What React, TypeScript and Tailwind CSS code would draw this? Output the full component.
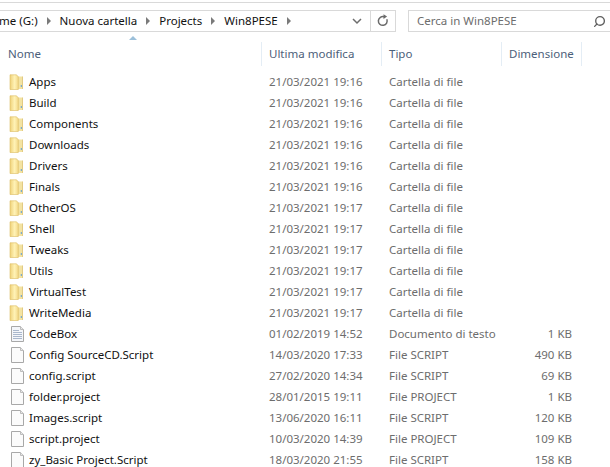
import { Search } from 'lucide-react';

const folders = [
  ['Apps', '21/03/2021 19:16'],
  ['Build', '21/03/2021 19:16'],
  ['Components', '21/03/2021 19:16'],
  ['Downloads', '21/03/2021 19:16'],
  ['Drivers', '21/03/2021 19:16'],
  ['Finals', '21/03/2021 19:16'],
  ['OtherOS', '21/03/2021 19:17'],
  ['Shell', '21/03/2021 19:17'],
  ['Tweaks', '21/03/2021 19:17'],
  ['Utils', '21/03/2021 19:17'],
  ['VirtualTest', '21/03/2021 19:17'],
  ['WriteMedia', '21/03/2021 19:17'],
];

const files = [
  ['CodeBox', '01/02/2019 14:52', 'Documento di testo', '1 KB', 'text'],
  ['Config SourceCD.Script', '14/03/2020 17:33', 'File SCRIPT', '490 KB', 'blank'],
  ['config.script', '27/02/2020 14:34', 'File SCRIPT', '69 KB', 'blank'],
  ['folder.project', '28/01/2015 19:11', 'File PROJECT', '1 KB', 'blank'],
  ['Images.script', '13/06/2020 16:11', 'File SCRIPT', '120 KB', 'blank'],
  ['script.project', '10/03/2020 14:39', 'File PROJECT', '109 KB', 'blank'],
  ['zy_Basic Project.Script', '18/03/2020 21:55', 'File SCRIPT', '158 KB', 'blank'],
];

function FolderIcon() {
  return (
    <svg width="16" height="16" viewBox="0 0 16 16" className="shrink-0">
      <defs>
        <linearGradient id="fold" x1="0" y1="0" x2="1" y2="0">
          <stop offset="0" stopColor="#efd27a" />
          <stop offset="0.55" stopColor="#fff2b5" />
          <stop offset="1" stopColor="#f3d98a" />
        </linearGradient>
      </defs>
      <path d="M9 2.5h5.5v12.5H9z" fill="#f3e3a2" />
      <path d="M14 2.5h.8V15H14z" fill="#dcc070" />
      <path d="M12.8 11h1v2h-1z" fill="#5a9fd8" />
      <path d="M2 0.8h6.5l1.8 2V15.5H2z" fill="url(#fold)" stroke="#dcbc62" strokeWidth="0.6" />
    </svg>
  );
}

function FileIcon({ kind }: { kind: string }) {
  return (
    <svg width="16" height="16" viewBox="0 0 16 16" className="shrink-0">
      <path d="M3.5 0.5h9l3 3v12h-12z" fill={kind === 'text' ? '#f4f6fa' : '#fbfbfb'} stroke="#a8a8a8" />
      <path d="M12.5 0.5v3h3" fill="#e8e8e8" stroke="#bdbdbd" />
      {kind === 'text' && (
        <path d="M5 4.5h6M5 6.5h9M5 8.5h9M5 10.5h9M5 12.5h9" stroke="#a9b7cc" strokeWidth="1" />
      )}
    </svg>
  );
}

function Crumb({ label }: { label: string }) {
  return (
    <>
      <span>{label}</span>
      <span className="mx-[9px] h-0 w-0 border-y-[4px] border-l-[4px] border-y-transparent border-l-[#7a7a7a]" />
    </>
  );
}

function HeaderCell({ label, className }: { label: string; className: string }) {
  return (
    <div className={`flex h-[24px] items-center border-r border-[#e4edf5] pl-[7px] text-[#4c607a] ${className}`}>
      {label}
    </div>
  );
}

export default function App() {
  return (
    <div
      className="h-[467px] w-[610px] overflow-hidden bg-white text-[11.5px] text-[#111111]"
      style={{ fontFamily: '"Noto Sans", "Open Sans", sans-serif' }}
    >
      <div className="mt-[2px] h-[1px] bg-[#d9d9d9]" />

      {/* Address and search */}
      <div className="mt-[7px] flex h-[22px]">
        <div className="ml-[-2px] flex w-[398px] items-center border border-[#d9d9d9]">
          <div className="flex flex-1 items-center whitespace-nowrap">
            <Crumb label="me (G:)" />
            <Crumb label="Nuova cartella" />
            <Crumb label="Projects" />
            <Crumb label="Win8PESE" />
          </div>
          <svg width="10" height="8" viewBox="0 0 10 8" className="mr-[8px]">
            <path d="M1 2l4 4 4-4" fill="none" stroke="#6d6d6d" strokeWidth="1.5" />
          </svg>
          <div className="flex h-full w-[25px] items-center justify-center border-l border-[#d9d9d9]">
            <svg width="12" height="14" viewBox="0 0 12 14">
              <path d="M9.8 5.2a4.4 4.4 0 1 1-2.6-2.4" fill="none" stroke="#6b6b6b" strokeWidth="1.5" />
              <path d="M6.5 0.3v4.6l3.6-2.4z" fill="#6b6b6b" />
            </svg>
          </div>
        </div>
        <div className="ml-[12px] flex flex-1 items-center justify-between border-y border-l border-[#d9d9d9] pl-[8px] pr-[4px] text-[#6d6d6d]">
          <span>Cerca in Win8PESE</span>
          <Search size={13} strokeWidth={2.5} className="-scale-x-100 text-[#5f5f5f]" />
        </div>
      </div>

      {/* Column headers */}
      <div className="relative mt-[9px] grid grid-cols-[262px_120px_120px_80px] pt-[1px]">
        <span className="absolute left-[129px] top-[-5px] h-0 w-0 border-x-[4px] border-b-[4px] border-x-transparent border-b-[#9cc0da]" />
        <HeaderCell label="Nome" className="pl-[8px]" />
        <HeaderCell label="Ultima modifica" className="" />
        <HeaderCell label="Tipo" className="" />
        <HeaderCell label="Dimensione" className="" />
      </div>

      {/* Rows */}
      <div className="mt-[5px]">
        {folders.map(([name, date]) => (
          <div key={name} className="grid h-[21px] grid-cols-[262px_120px_120px_80px] items-center">
            <div className="flex items-center gap-[5px] pl-[8px]">
              <FolderIcon />
              <span>{name}</span>
            </div>
            <div className="pl-[7px] text-[#6d6d6d]">{date}</div>
            <div className="pl-[7px] text-[#6d6d6d]">Cartella di file</div>
            <div />
          </div>
        ))}
        {files.map(([name, date, type, size, kind]) => (
          <div key={name} className="grid h-[21px] grid-cols-[262px_120px_120px_80px] items-center">
            <div className="flex items-center gap-[5px] pl-[8px]">
              <FileIcon kind={kind} />
              <span>{name}</span>
            </div>
            <div className="pl-[7px] text-[#6d6d6d]">{date}</div>
            <div className="pl-[7px] text-[#6d6d6d]">{type}</div>
            <div className="pr-[10px] text-right text-[#6d6d6d]">{size}</div>
          </div>
        ))}
      </div>
    </div>
  );
}
